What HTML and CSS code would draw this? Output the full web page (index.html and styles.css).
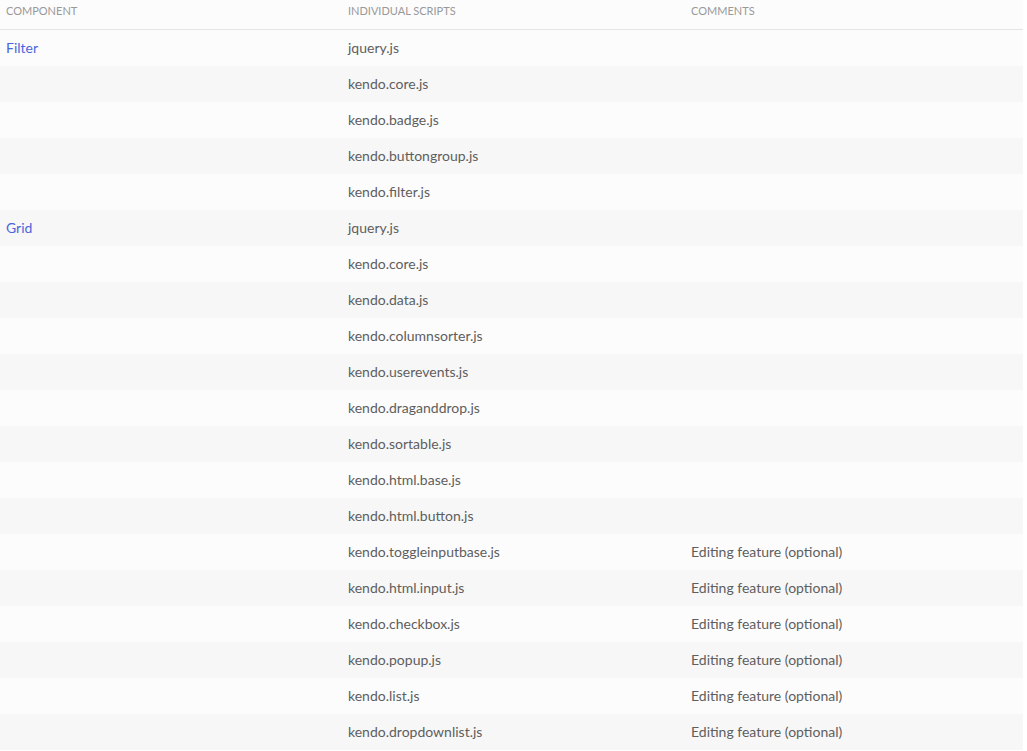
FILE: index.html
```html
<!DOCTYPE html>
<html lang="en">
<head>
    <meta charset="UTF-8">
    <title>Scripts</title>
    <link rel="stylesheet" href="styles.css">
</head>
<body>

<table class="scripts">
    <colgroup>
        <col class="col-component">
        <col class="col-scripts">
        <col class="col-comments">
    </colgroup>
    <thead>
        <tr>
            <th>Component</th>
            <th>Individual scripts</th>
            <th>Comments</th>
        </tr>
    </thead>
    <tbody>
        <tr><td><a href="#">Filter</a></td><td>jquery.js</td><td></td></tr>
        <tr><td></td><td>kendo.core.js</td><td></td></tr>
        <tr><td></td><td>kendo.badge.js</td><td></td></tr>
        <tr><td></td><td>kendo.buttongroup.js</td><td></td></tr>
        <tr><td></td><td>kendo.filter.js</td><td></td></tr>
        <tr><td><a href="#">Grid</a></td><td>jquery.js</td><td></td></tr>
        <tr><td></td><td>kendo.core.js</td><td></td></tr>
        <tr><td></td><td>kendo.data.js</td><td></td></tr>
        <tr><td></td><td>kendo.columnsorter.js</td><td></td></tr>
        <tr><td></td><td>kendo.userevents.js</td><td></td></tr>
        <tr><td></td><td>kendo.draganddrop.js</td><td></td></tr>
        <tr><td></td><td>kendo.sortable.js</td><td></td></tr>
        <tr><td></td><td>kendo.html.base.js</td><td></td></tr>
        <tr><td></td><td>kendo.html.button.js</td><td></td></tr>
        <tr><td></td><td>kendo.toggleinputbase.js</td><td>Editing feature (optional)</td></tr>
        <tr><td></td><td>kendo.html.input.js</td><td>Editing feature (optional)</td></tr>
        <tr><td></td><td>kendo.checkbox.js</td><td>Editing feature (optional)</td></tr>
        <tr><td></td><td>kendo.popup.js</td><td>Editing feature (optional)</td></tr>
        <tr><td></td><td>kendo.list.js</td><td>Editing feature (optional)</td></tr>
        <tr><td></td><td>kendo.dropdownlist.js</td><td>Editing feature (optional)</td></tr>
    </tbody>
</table>

</body>
</html>
```

FILE: styles.css
```css
body {
    margin: 0;
    background: #ffffff;
    font-family: 'Lato', 'Open Sans', sans-serif;
    color: #5e5e5e;
}
.scripts {
    width: 1023px;
    border-collapse: collapse;
    table-layout: fixed;
    background-color: #fcfcfc;
}
.col-component {
    width: 342px;
}
.col-scripts {
    width: 343px;
}
.col-comments {
    width: 338px;
}
.scripts th {
    padding: 4px 6px 12px;
    line-height: 13px;
    text-align: left;
    vertical-align: top;
    font-size: 11px;
    font-weight: normal;
    text-transform: uppercase;
    color: #999999;
    border-bottom: 1px solid #e4e4e4;
}
.scripts td {
    padding: 0 6px;
    line-height: 36px;
    font-size: 14px;
    vertical-align: middle;
}
.scripts tbody tr:nth-child(even) {
    background-color: #f7f7f7;
}
.scripts a {
    color: #4a66dd;
    text-decoration: none;
}
```
